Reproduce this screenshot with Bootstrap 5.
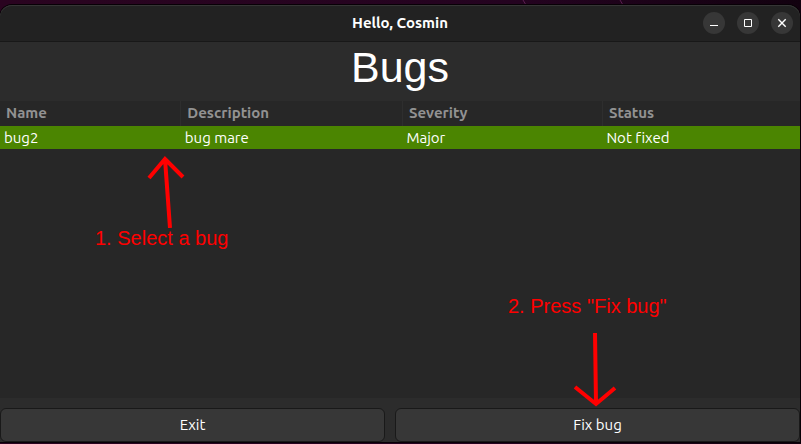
<!DOCTYPE html>
<html lang="en">
<head>
<meta charset="utf-8">
<meta name="viewport" content="width=device-width, initial-scale=1">
<title>Hello, Cosmin</title>
<link href="https://cdn.jsdelivr.net/npm/bootstrap@5.3.0/dist/css/bootstrap.min.css" rel="stylesheet">
<style>
  body { background: linear-gradient(90deg, #2a0420, #240320 65%, #12010f); font: 15px/20px Ubuntu, "Noto Sans", sans-serif; color: #fff; padding: 5px 1px 2px 0; }
  .desktop-lines { top: 0; left: 65%; }
  .app-window { background: #2c2c2c; border-radius: 12px 12px 0 0; box-shadow: 0 0 0 1px #080006; }
  .title-bar { height: 37px; background: #222; border-bottom: 1px solid #181818; border-radius: 12px 12px 0 0; box-shadow: inset 0 1px #353535; }
  .title-bar h1 { font-size: 15px; line-height: 20px; font-weight: 700; }
  .window-controls { right: 7px; gap: 12px; }
  .window-controls button { width: 22px; height: 22px; background: #373737; color: #fff; }
  .page-heading { font: 43px/50px "Liberation Sans", Arial, sans-serif; padding-bottom: 9px; }
  .bug-list { background: #272727; }
  .bug-table { table-layout: fixed; line-height: 20px; }
  .bug-table th { height: 25px; padding: 2px 6px 3px; color: #929292; font-weight: 700; border-right: 1px solid #2e2e2e; }
  .bug-table th:last-child { border-right: 0; }
  .bug-table td { height: 23px; padding: 2px 4px 1px; background: #4b8501; color: #fff; font-variant-ligatures: none; }
  .col-name { width: 22.6%; }
  .col-desc { width: 27.7%; }
  .col-sev { width: 25%; }
  .action-bar { gap: 10px; padding-top: 10px; }
  .action-bar button { height: 34px; background: #373737; border: 1px solid #191919; border-radius: 6px; color: #fff; font-size: 15px; line-height: 20px; padding: 0; flex: 385 1 0; font-variant-ligatures: none; }
  .action-bar .fix-button { flex-grow: 405; }
  .note { color: #f00; font: 20px/20px "Liberation Sans", Arial, sans-serif; white-space: nowrap; pointer-events: none; }
  .note svg { display: block; fill: none; stroke: #f00; stroke-width: 4; }
  .note-select { left: 95px; top: 151px; }
  .note-select svg { margin-left: 50px; }
  .note-press { left: 508px; bottom: 34px; }
  .note-press svg { margin: 17px 0 0 62px; }
</style>
<script src="https://cdn.jsdelivr.net/npm/bootstrap@5.3.0/dist/js/bootstrap.bundle.min.js"></script>
</head>
<body class="vh-100 d-flex flex-column overflow-hidden position-relative">
<svg class="desktop-lines position-absolute" width="110" height="5" fill="none" stroke="#5a1f50" stroke-width="1" aria-hidden="true"><path d="M2 0 5 5M99 0l3 5"/></svg>
<main class="app-window flex-grow-1 d-flex flex-column position-relative">
  <header class="title-bar d-flex align-items-center justify-content-center position-relative">
    <h1 class="m-0">Hello, Cosmin</h1>
    <div class="window-controls position-absolute d-flex">
      <button type="button" class="btn rounded-circle border-0 p-0 d-flex" aria-label="Minimize"><svg width="22" height="22" fill="none" stroke="currentColor" aria-hidden="true"><path d="M7 13.5h8"/></svg></button>
      <button type="button" class="btn rounded-circle border-0 p-0 d-flex" aria-label="Maximize"><svg width="22" height="22" fill="none" stroke="currentColor" aria-hidden="true"><path d="M7.5 7.5h7v7h-7z"/></svg></button>
      <button type="button" class="btn rounded-circle border-0 p-0 d-flex" aria-label="Close"><svg width="22" height="22" fill="none" stroke="currentColor" stroke-width="1.4" aria-hidden="true"><path d="m7.3 7.3 7.4 7.4m0-7.4-7.4 7.4"/></svg></button>
    </div>
  </header>
  <h2 class="page-heading text-center m-0 pt-0">Bugs</h2>
  <section class="bug-list flex-grow-1">
    <table class="bug-table w-100">
      <thead><tr><th scope="col" class="col-name">Name</th><th scope="col" class="col-desc">Description</th><th scope="col" class="col-sev">Severity</th><th scope="col">Status</th></tr></thead>
      <tbody><tr aria-selected="true"><td>bug2</td><td>bug mare</td><td>Major</td><td>Not fixed</td></tr></tbody>
    </table>
  </section>
  <div class="action-bar d-flex">
    <button type="button" class="btn">Exit</button>
    <button type="button" class="btn fix-button">Fix bug</button>
  </div>
  <div class="note note-select position-absolute">
    <svg width="44" height="72" aria-hidden="true"><path d="M25 72 20 3M4 22 20 3l18 18"/></svg>
    <div>1. Select a bug</div>
  </div>
  <div class="note note-press position-absolute">
    <div>2. Press "Fix bug"</div>
    <svg width="50" height="75" aria-hidden="true"><path d="M25 0 26 70M5 54l21 17 19-16"/></svg>
  </div>
</main>
</body>
</html>
